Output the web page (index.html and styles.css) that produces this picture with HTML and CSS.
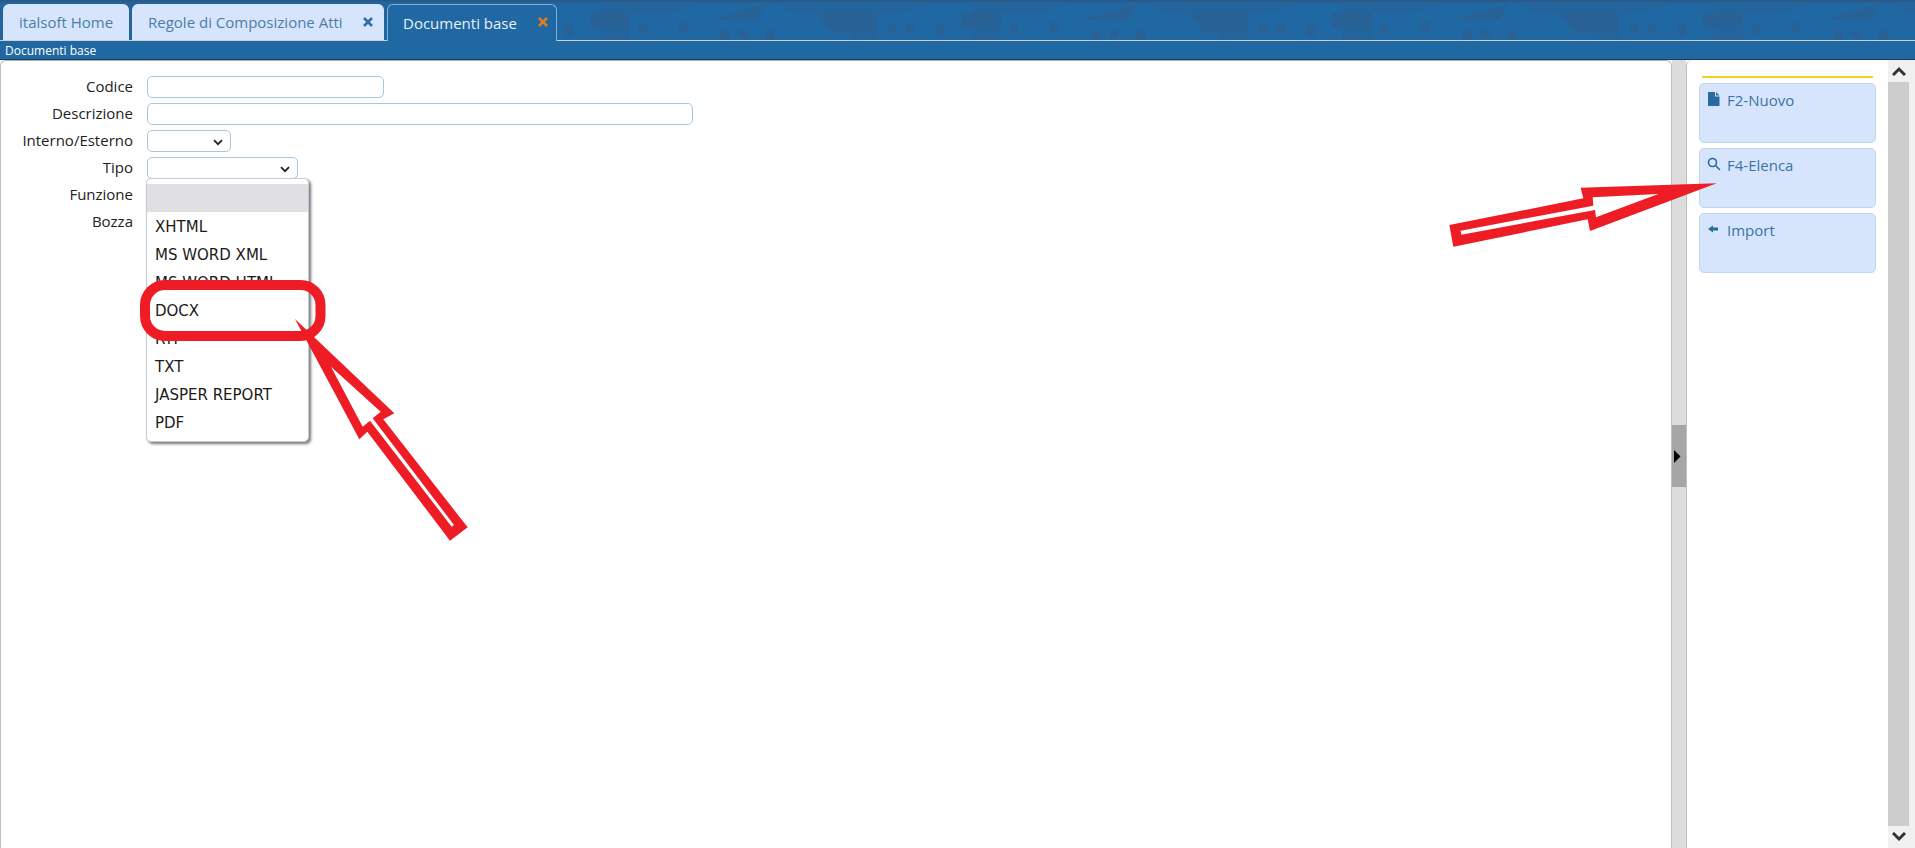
FILE: index.html
```html
<!DOCTYPE html>
<html lang="it">
<head>
<meta charset="utf-8">
<title>Documenti base</title>
<link rel="stylesheet" href="styles.css">
</head>
<body>
<div class="page">
  <header class="tabstrip">
    <svg class="tabstrip-art" width="1915" height="40" aria-hidden="true">
      <defs>
        <pattern id="town" width="371" height="40" patternUnits="userSpaceOnUse" patternTransform="translate(600 0)">
          <path d="M-10 13H30V28H-10ZM361 13H401V28H361ZM113 20L167 3L157 20ZM217 13H277V33H233Z"/>
          <path d="M0 4H100L70 13H30V40H0ZM180 4H330L300 13H277V40H250V33H233L217 13H190Z" opacity=".45"/>
          <ellipse cx="43" cy="29" rx="5" ry="5"/><ellipse cx="83" cy="27" rx="5" ry="6"/>
          <ellipse cx="125" cy="35" rx="5" ry="5"/><ellipse cx="143" cy="34" rx="5" ry="5"/>
          <ellipse cx="170" cy="35" rx="5" ry="6"/><ellipse cx="292" cy="28" rx="5" ry="6"/>
          <ellipse cx="310" cy="28" rx="5" ry="6"/><ellipse cx="340" cy="30" rx="5" ry="7"/>
        </pattern>
        <linearGradient id="topshade" x1="0" y1="0" x2="0" y2="1">
          <stop offset="0" stop-color="#2b5683"/><stop offset="1" stop-color="#2b5683" stop-opacity="0"/>
        </linearGradient>
      </defs>
      <rect width="1915" height="40" fill="url(#town)" class="town"/>
      <rect width="1915" height="4" fill="url(#topshade)"/>
    </svg>
    <div class="tab tab-home"><span>italsoft Home</span></div>
    <div class="tab tab-rules"><span>Regole di Composizione Atti</span><svg class="close" width="10" height="10" viewBox="0 0 10 10"><path d="M1 1L9 9M9 1L1 9"/></svg></div>
    <div class="tab tab-active"><span>Documenti base</span><svg class="close" width="10" height="10" viewBox="0 0 10 10"><path d="M1 1L9 9M9 1L1 9"/></svg></div>
  </header>
  <div class="titlebar">Documenti base</div>
  <main class="workspace">
    <section class="form-pane">
      <form class="form">
        <label class="lbl">Codice</label>
        <input class="field field-code" type="text">
        <label class="lbl">Descrizione</label>
        <input class="field field-desc" type="text">
        <label class="lbl">Interno/Esterno</label>
        <div class="field select select-ie"><svg width="10" height="7" viewBox="0 0 10 7"><path d="M1 1.2L5 5.2L9 1.2"/></svg></div>
        <label class="lbl">Tipo</label>
        <div class="field select select-tipo"><svg width="10" height="7" viewBox="0 0 10 7"><path d="M1 1.2L5 5.2L9 1.2"/></svg></div>
        <label class="lbl">Funzione</label>
        <div class="spacer"></div>
        <label class="lbl">Bozza</label>
        <div class="spacer"></div>
      </form>
      <ul class="dropdown">
        <li class="selected">&nbsp;</li>
        <li>XHTML</li>
        <li>MS WORD XML</li>
        <li>MS WORD HTML</li>
        <li>DOCX</li>
        <li>RTF</li>
        <li>TXT</li>
        <li>JASPER REPORT</li>
        <li>PDF</li>
      </ul>
    </section>
    <div class="splitter">
      <div class="handle"><svg width="8" height="13" viewBox="0 0 8 13"><path d="M1 0L7.500 6.500L1 13Z"/></svg></div>
    </div>
    <aside class="side-pane">
      <div class="side-rule"></div>
      <button class="action" type="button">
        <svg class="ico" width="12" height="14" viewBox="0 0 12 14"><path d="M0 0H7V4.500H11.500V14H0ZM8 0L11.500 3.500H8Z"/></svg>
        <span>F2-Nuovo</span>
      </button>
      <button class="action" type="button">
        <svg class="ico ico-line" width="14" height="14" viewBox="0 0 14 14"><circle cx="5.500" cy="5.500" r="4"/><path d="M8.500 8.500L13 13"/></svg>
        <span>F4-Elenca</span>
      </button>
      <button class="action" type="button">
        <svg class="ico" width="12" height="14" viewBox="0 0 12 14"><path d="M0 7L5 3.500V5.500H10V8.500H5V10.500Z"/></svg>
        <span>Import</span>
      </button>
    </aside>
    <div class="scrollbar">
      <div class="scroll-btn"><svg class="chev" width="14" height="10" viewBox="0 0 14 10"><path d="M1 9L7 3L13 9"/></svg></div>
      <div class="scroll-track"></div>
      <div class="scroll-btn"><svg class="chev" width="14" height="10" viewBox="0 0 14 10"><path d="M1 1L7 7L13 1"/></svg></div>
    </div>
  </main>
</div>
<svg class="annotations" width="1915" height="848" viewBox="0 0 1915 848" aria-hidden="true">
  <rect class="ring" x="145" y="285" width="175.500" height="51" rx="20"/>
  <g transform="translate(130 170) scale(.33333)">
    <path class="red" fill-rule="evenodd" d="M495 447L793 730L760 748L1013 1072L960 1112L712 785L688 808ZM603 590L698 770L720 752L965 1070L972 1065L728 745L752 725Z"/>
  </g>
  <g transform="translate(1420 160) scale(.33333)">
    <path class="red" fill-rule="evenodd" d="M88 195L490 115L482 83L890 70L510 213L503 178L100 260ZM122 212L124 224L525 150L528 172L715 102L518 112L520 137Z"/>
  </g>
</svg>
</body>
</html>
```
FILE: styles.css
```css
* { box-sizing: border-box; }
html, body { margin: 0; height: 100%; overflow: hidden; }
body { font-family: "Open Sans", "Noto Sans", sans-serif; font-size: 15px; background: #fff; color: #222; }
.page { display: flex; flex-direction: column; height: 848px; }

.tabstrip { position: relative; flex: none; height: 41px; background: #2068a3; border-bottom: 1px solid #cfcfcf; display: flex; align-items: flex-end; padding-left: 3px; gap: 3px; }
.tabstrip-art { position: absolute; left: 0; top: 0; }
.town { opacity: .6; }
#town path, #town ellipse { fill: #2e5c8e; }
.tab { position: relative; height: 36px; display: flex; align-items: center; font-size: 15px; border-radius: 6px 6px 0 0; background: #d6e5fc; color: #4c7da8; }
.tab-home { width: 126px; padding-left: 16px; }
.tab-rules { width: 252px; padding-left: 16px; }
.tab-active { width: 170px; padding-left: 15px; background: #2068a3; color: #e9f1f8; border: 1px solid #7fb1d8; border-bottom: 0; height: 37px; margin-bottom: -1px; }
.close { position: absolute; right: 11px; top: 13px; fill: none; stroke: #2f6ea3; stroke-width: 2.600; }
.tab-active .close { stroke: #e07b20; right: 8px; top: 12px; }

.titlebar { flex: none; height: 19px; background: #2068a3; color: #fff; font-size: 12px; line-height: 20px; padding-left: 5px; border-bottom: 1px solid #1c3a55; }

.workspace { flex: 1; display: flex; min-height: 0; }
.form-pane { position: relative; width: 1672px; background: #fff; border: 1px solid #bdbdbd; border-top-color: #a9b3b3; border-radius: 6px 6px 0 0; border-bottom: 0; }
.form { display: grid; grid-template-columns: 132px 1fr; column-gap: 14px; row-gap: 5px; padding-top: 15px; grid-auto-rows: 22px; }
.lbl { text-align: right; line-height: 20px; color: #222; }
.field { display: block; height: 22px; border: 1px solid #a6c8e4; border-radius: 5px; background: #fff; padding: 0; }
.field-code { width: 237px; }
.field-desc { width: 546px; }
.select { position: relative; }
.select svg { position: absolute; top: 8px; right: 7px; fill: none; stroke: #222; stroke-width: 1.8; }
.select-ie { width: 84px; }
.select-tipo { width: 151px; }
.spacer { height: 22px; }

.dropdown { position: absolute; left: 145px; top: 117px; width: 163px; height: 264px; margin: 0; padding: 5px 0 0; list-style: none; background: #fff; border: 1px solid #c5ccd6; border-radius: 5px; box-shadow: 2px 2px 3px #777; font-family: "DejaVu Sans", sans-serif; font-size: 15px; color: #1a1a1a; }
.dropdown li { height: 28px; line-height: 30px; padding-left: 8px; }
.dropdown .selected { background: #dfdfe4; }

.splitter { flex: none; width: 14px; background: #dcdcdc; padding-top: 365px; }
.handle { height: 62px; background: #a6a6a6; display: flex; align-items: center; padding-left: 1px; }
.handle svg { fill: #000; }

.side-pane { flex: none; width: 202px; display: flex; flex-direction: column; gap: 5px; padding: 16px 12px 0; background: #fff; border-left: 1px solid #bdbdbd; border-radius: 6px 0 0 0; }
.side-rule { height: 2px; margin: 0 3px; background: #f7d11e; }
.action { display: flex; align-items: flex-start; height: 60px; padding: 6px 0 0 7px; border: 1px solid #bfd6ee; border-radius: 5px; background: #d6e5fc; color: #3a74a6; font: 15px/20px "Open Sans", sans-serif; text-align: left; }
.ico { flex: none; margin-top: 2px; width: 14px; margin-right: 6px; fill: #2a6a9f; }
.ico-line { fill: none; stroke: #2a6a9f; stroke-width: 1.600; }

.scrollbar { flex: none; width: 27px; display: flex; flex-direction: column; background: #f0f0f0; padding-right: 6px; }
.scroll-btn { flex: none; height: 22px; background: #f1f1f1; display: flex; align-items: center; justify-content: center; }
.chev { display: block; flex: none; fill: none; stroke: #333; stroke-width: 3; }
.scroll-track { flex: 1; background: #cdcdcd; }

.annotations { position: absolute; left: 0; top: 0; pointer-events: none; }
.ring { fill: none; stroke: #ee1c25; stroke-width: 10; }
.red { fill: #ee1c25; }
```
